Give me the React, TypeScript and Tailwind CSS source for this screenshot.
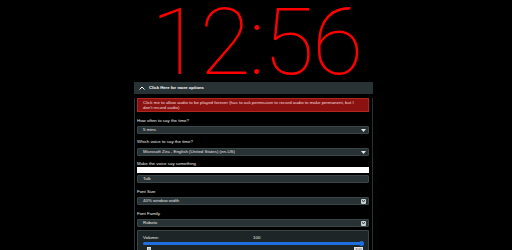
import React from 'react';

const small = { fontFamily: '"Liberation Sans", Arial, sans-serif' };

function Caret() {
  return (
    <svg width="5" height="3" viewBox="0 0 5 3" className="shrink-0">
      <path d="M0 0 L5 0 L2.5 3 Z" fill="#e5e7eb" />
    </svg>
  );
}

function BoxCaret() {
  return (
    <span className="flex h-[5px] w-[5px] items-center justify-center rounded-[1px] bg-[#c9cfd1]">
      <svg width="3" height="2" viewBox="0 0 3 2">
        <path d="M0 0 L1.5 2 L3 0" stroke="#1f2628" strokeWidth="0.8" fill="none" />
      </svg>
    </span>
  );
}

function Select({ value, boxed }: { value: string; boxed?: boolean }) {
  return (
    <div className="flex h-[8px] items-center justify-between rounded-[1px] border border-[#3a4548] bg-[#283134] pl-[5px] pr-[2px] text-[4.4px] text-[#e6e6e6]">
      <span>{value}</span>
      {boxed ? <BoxCaret /> : <Caret />}
    </div>
  );
}

function Label({ text, className }: { text: string; className: string }) {
  return <div className={`text-[4.4px] text-[#f0f0f0] ${className}`}>{text}</div>;
}

export default function App() {
  return (
    <div className="h-[250px] w-[512px] overflow-hidden bg-black" style={small}>
      <div className="flex h-[82px] justify-center">
        <span
          className="mt-[5px] h-[76px] text-[93px] leading-[76px] tracking-[-2px] text-[#ff0000]"
          style={{ fontFamily: 'Roboto, sans-serif', fontWeight: 100 }}
        >
          12:56
        </span>
      </div>

      <div className="ml-[134px] w-[239px]">
        <div className="flex h-[12px] items-center gap-[4px] bg-[#283134] pl-[5px]">
          <svg width="6" height="4" viewBox="0 0 6 4">
            <path d="M0.5 3.5 L3 1 L5.5 3.5" stroke="#fff" strokeWidth="1" fill="none" />
          </svg>
          <span className="text-[4.2px] font-semibold text-white">Click Here for more options</span>
        </div>

        <div className="border-x border-[#283134] pl-[2px] pr-[3px] pb-[10px]">
          <div className="mt-[4px] flex h-[14px] flex-col justify-center border border-[#b3261e] bg-[#8c1111] pl-[5px] text-[4.4px] leading-[5px] text-[#f3dede]">
            <div>Click me to allow audio to be played forever (has to ask permission to record audio to make permanent, but I</div>
            <div>don't record audio)</div>
          </div>

          <Label text="How often to say the time?" className="mt-[5px] h-[8px] leading-[8px]" />
          <div className="mt-[1px]">
            <Select value="5 mins" />
          </div>

          <Label text="Which voice to say the time?" className="mt-[4px] h-[8px] leading-[8px]" />
          <div className="mt-[2px]">
            <Select value="Microsoft Zira - English (United States) (en-US)" />
          </div>

          <Label text="Make the voice say something" className="mt-[5px] h-[6px] leading-[6px]" />
          <div className="h-[6px] bg-white" />
          <div className="mt-[2px] flex h-[8px] items-center rounded-[1px] border border-[#3a4548] bg-[#283134] pl-[5px] text-[4.4px] text-[#e6e6e6]">
            Talk
          </div>

          <Label text="Font Size" className="mt-[5px] h-[8px] leading-[8px]" />
          <div className="mt-[1px]">
            <Select value="40% window width" boxed />
          </div>

          <Label text="Font Family" className="mt-[5px] h-[8px] leading-[8px]" />
          <div className="mt-[1px]">
            <Select value="Roboto" boxed />
          </div>

          <div className="mt-[3px] h-[30px] rounded-[1px] border border-[#3a4548] bg-[#1e2527] px-[5px] pt-[4px]">
            <div className="relative h-[6px] text-[4.4px] leading-[6px] text-[#f0f0f0]">
              <span>Volume:</span>
              <span className="absolute left-[110px] top-0">100</span>
            </div>
            <div className="relative mt-[1px] h-[3px] rounded-full bg-[#1e6fe0]">
              <span className="absolute right-[-1px] top-[-1px] h-[5px] w-[5px] rounded-full bg-[#1e6fe0]" />
            </div>
            <div className="mt-[1px] flex h-[6px] items-center justify-between pl-[4px] text-[4px] text-[#222]">
              <span className="bg-[#e5e5e5] px-[1px] leading-[5px]">0</span>
              <span className="bg-[#e5e5e5] px-[1px] leading-[5px]">100</span>
            </div>
          </div>
        </div>
      </div>
    </div>
  );
}
